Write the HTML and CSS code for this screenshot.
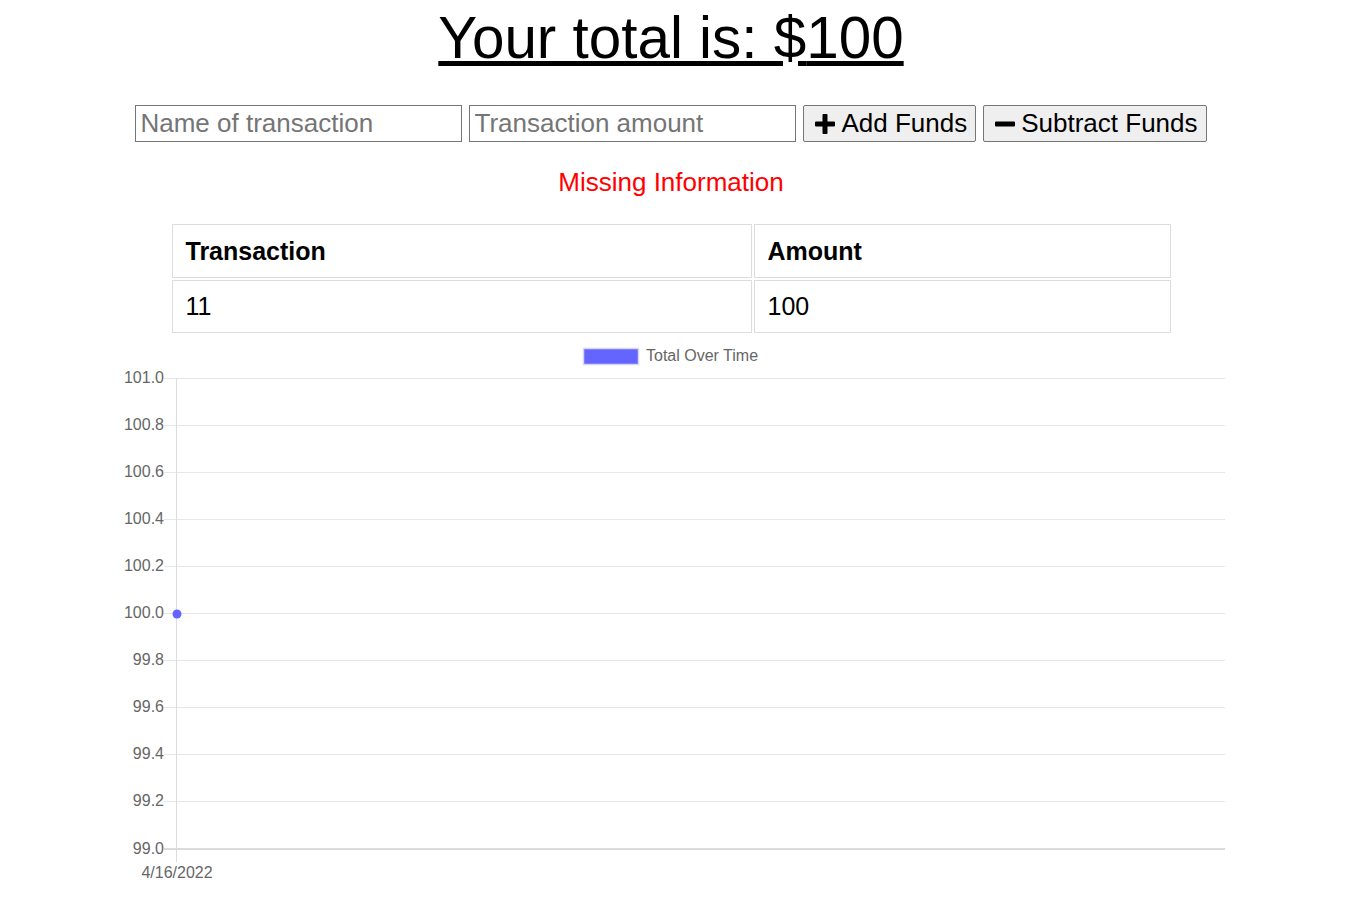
FILE: index.html
```html
<!DOCTYPE html>
<html lang="en">
<head>
<meta charset="utf-8">
<title>Budget Tracker</title>
<link rel="stylesheet" href="styles.css">
</head>
<body>
<div class="page">
  <h1 class="total">Your total is: $<span id="total">100</span></h1>

  <div class="form">
    <input type="text" class="field" placeholder="Name of transaction">
    <input type="text" class="field" placeholder="Transaction amount">
    <button class="btn"><svg viewBox="0 0 20 20" aria-hidden="true"><rect x="7.5" y="0" width="5" height="20" rx="1"/><rect x="0" y="7.5" width="20" height="5" rx="1"/></svg>Add Funds</button>
    <button class="btn"><svg viewBox="0 0 20 20" aria-hidden="true"><rect x="0" y="7.5" width="20" height="5" rx="1"/></svg>Subtract Funds</button>
  </div>

  <p class="error">Missing Information</p>

  <table class="tx">
    <thead>
      <tr><th>Transaction</th><th>Amount</th></tr>
    </thead>
    <tbody>
      <tr><td>11</td><td>100</td></tr>
    </tbody>
  </table>

  <svg class="chart" viewBox="0 335 1342 565" aria-label="Total Over Time chart">
    <rect class="legend-box" x="583.5" y="348.5" width="55" height="16"/>
    <text class="lbl" x="646" y="361">Total Over Time</text>

    <g class="grid">
      <line x1="164" y1="378.5" x2="1225" y2="378.5"/>
      <line x1="164" y1="425.5" x2="1225" y2="425.5"/>
      <line x1="164" y1="472.5" x2="1225" y2="472.5"/>
      <line x1="164" y1="519.5" x2="1225" y2="519.5"/>
      <line x1="164" y1="566.5" x2="1225" y2="566.5"/>
      <line x1="164" y1="613.5" x2="1225" y2="613.5"/>
      <line x1="164" y1="660.5" x2="1225" y2="660.5"/>
      <line x1="164" y1="707.5" x2="1225" y2="707.5"/>
      <line x1="164" y1="754.5" x2="1225" y2="754.5"/>
      <line x1="164" y1="801.5" x2="1225" y2="801.5"/>
    </g>
    <line class="axis-x" x1="164" y1="849" x2="1225" y2="849"/>
    <line class="axis-y" x1="176.5" y1="378" x2="176.5" y2="862"/>

    <g class="ylabels">
      <text x="164" y="383">101.0</text>
      <text x="164" y="430">100.8</text>
      <text x="164" y="477">100.6</text>
      <text x="164" y="524">100.4</text>
      <text x="164" y="571">100.2</text>
      <text x="164" y="618">100.0</text>
      <text x="164" y="665">99.8</text>
      <text x="164" y="712">99.6</text>
      <text x="164" y="759">99.4</text>
      <text x="164" y="806">99.2</text>
      <text x="164" y="854">99.0</text>
    </g>
    <text class="lbl xlabel" x="177" y="877.5">4/16/2022</text>

    <circle class="dot" cx="177" cy="614" r="4.5"/>
  </svg>
</div>
</body>
</html>
```

FILE: styles.css
```css
html,
body {
  margin: 0;
  padding: 0;
  background: #fff;
}

body {
  font-family: "Liberation Sans", Arial, sans-serif;
  color: #000;
}

.page {
  width: 1342px;
}

.total {
  margin: 4px 0 0;
  font-size: 58.4px;
  line-height: 67px;
  font-weight: normal;
  text-align: center;
  text-decoration: underline;
}

.form {
  display: flex;
  justify-content: center;
  gap: 7px;
  margin-top: 34px;
}

.field {
  box-sizing: border-box;
  width: 327px;
  height: 37px;
  margin: 0;
  padding: 0 4px;
  border: 1px solid #767676;
  border-radius: 0;
  background: #fff;
  color: #000;
  font: 26px "Liberation Sans", Arial, sans-serif;
  outline: none;
}

.field::placeholder {
  color: #757575;
}

.btn {
  box-sizing: border-box;
  height: 37px;
  margin: 0;
  display: flex;
  align-items: center;
  gap: 6px;
  padding: 0 8px 0 11px;
  border: 1px solid #767676;
  border-radius: 2px;
  background: #efefef;
  color: #000;
  font: 26px "Liberation Sans", Arial, sans-serif;
}

.btn svg {
  width: 20px;
  height: 20px;
  flex: none;
  fill: #000;
}

.error {
  margin: 25px 0 0;
  text-align: center;
  color: #ff0000;
  font-size: 26px;
  line-height: 30px;
}

.tx {
  margin: 25px auto 0;
  width: 1003px;
  border-spacing: 2px;
  table-layout: fixed;
  font-size: 25px;
  line-height: 29px;
}

.tx th,
.tx td {
  border: 1px solid #ddd;
  padding: 11px 13px;
  text-align: left;
}

.tx th {
  padding-top: 12px;
  font-weight: bold;
}

.tx th:first-child {
  width: 552px;
}

.chart {
  display: block;
  width: 1342px;
  height: 565px;
}

.chart text {
  font-family: "Liberation Sans", Arial, sans-serif;
  font-size: 16px;
  fill: #666;
}

.ylabels text {
  text-anchor: end;
}

.chart .xlabel {
  text-anchor: middle;
}

.legend-box {
  fill: #6464ff;
  stroke: #d6d6f0;
  stroke-width: 1.5;
}

.grid line {
  stroke: #e6e6e6;
  stroke-width: 1;
}

.axis-x {
  stroke: #cfcfcf;
  stroke-width: 1.5;
}

.axis-y {
  stroke: #dcdcdc;
  stroke-width: 1;
}

.dot {
  fill: #6464ff;
}
```
